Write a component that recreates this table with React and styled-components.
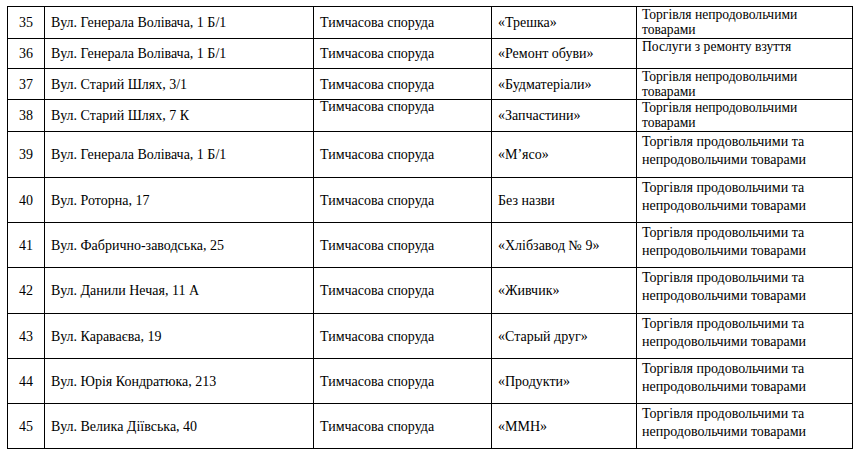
import styled, { createGlobalStyle } from "styled-components";

const GlobalStyle = createGlobalStyle`
  html, body {
    margin: 0;
    padding: 0;
    background: #fff;
  }
  body {
    font-family: "Liberation Serif", "Times New Roman", serif;
    color: #000;
  }
`;

const Page = styled.div`
  padding: 6px 0 0 7px;
`;

const Table = styled.table`
  border-collapse: collapse;
  table-layout: fixed;
  width: 845px;
  font-family: "Liberation Serif", "Times New Roman", serif;
  font-size: 14px;
`;

const Col = styled.col`
  width: ${(p) => p.$w}px;
`;

const Row = styled.tr`
  height: ${(p) => p.$h}px;
`;

const Cell = styled.td`
  border: 1px solid #000;
  padding: 0 6px;
  vertical-align: ${(p) => (p.$top ? "top" : "middle")};
  text-align: ${(p) => (p.$center ? "center" : "left")};
  line-height: ${(p) => (p.$top ? "13px" : "17px")};
  white-space: nowrap;
  overflow: hidden;
`;

const Note = styled.td`
  border: 1px solid #000;
  padding: ${(p) => (p.$tight ? "0 4px 0 5px" : "1px 4px 0 5px")};
  vertical-align: top;
  font-size: ${(p) => (p.$tight ? "13.6px" : "14px")};
  line-height: ${(p) => (p.$tight ? "15px" : "18px")};
`;

const widths = [37, 269, 178, 145, 216];

const food = "Торгівля продовольчими та непродовольчими товарами";
const nonFood = "Торгівля непродовольчими товарами";
const kind = "Тимчасова споруда";

const rows = [
  { n: 35, addr: "Вул. Генерала Волівача, 1 Б/1", name: "«Трешка»", note: nonFood, h: 32, tight: true },
  { n: 36, addr: "Вул. Генерала Волівача, 1 Б/1", name: "«Ремонт обуви»", note: "Послуги з ремонту взуття", h: 30, tight: true },
  { n: 37, addr: "Вул. Старий Шлях, 3/1", name: "«Будматеріали»", note: nonFood, h: 31, tight: true },
  { n: 38, addr: "Вул. Старий Шлях, 7 К", name: "«Запчастини»", note: nonFood, h: 32, tight: true, kindTop: true },
  { n: 39, addr: "Вул. Генерала Волівача, 1 Б/1", name: "«М’ясо»", note: food, h: 46 },
  { n: 40, addr: "Вул. Роторна, 17", name: "Без назви", note: food, h: 45 },
  { n: 41, addr: "Вул. Фабрично-заводська, 25", name: "«Хлібзавод № 9»", note: food, h: 45 },
  { n: 42, addr: "Вул. Данили Нечая, 11 А", name: "«Живчик»", note: food, h: 46 },
  { n: 43, addr: "Вул. Караваєва, 19", name: "«Старый друг»", note: food, h: 45 },
  { n: 44, addr: "Вул. Юрія Кондратюка, 213", name: "«Продукти»", note: food, h: 45 },
  { n: 45, addr: "Вул. Велика Дiївська, 40", name: "«ММН»", note: food, h: 45 },
];

export default function App() {
  return (
    <>
      <GlobalStyle />
      <Page>
        <Table>
          <colgroup>
            {widths.map((w, i) => (
              <Col key={i} $w={w} />
            ))}
          </colgroup>
          <tbody>
            {rows.map((r) => (
              <Row key={r.n} $h={r.h}>
                <Cell $center>{r.n}</Cell>
                <Cell>{r.addr}</Cell>
                <Cell $top={r.kindTop}>{kind}</Cell>
                <Cell>{r.name}</Cell>
                <Note $tight={r.tight}>{r.note}</Note>
              </Row>
            ))}
          </tbody>
        </Table>
      </Page>
    </>
  );
}
